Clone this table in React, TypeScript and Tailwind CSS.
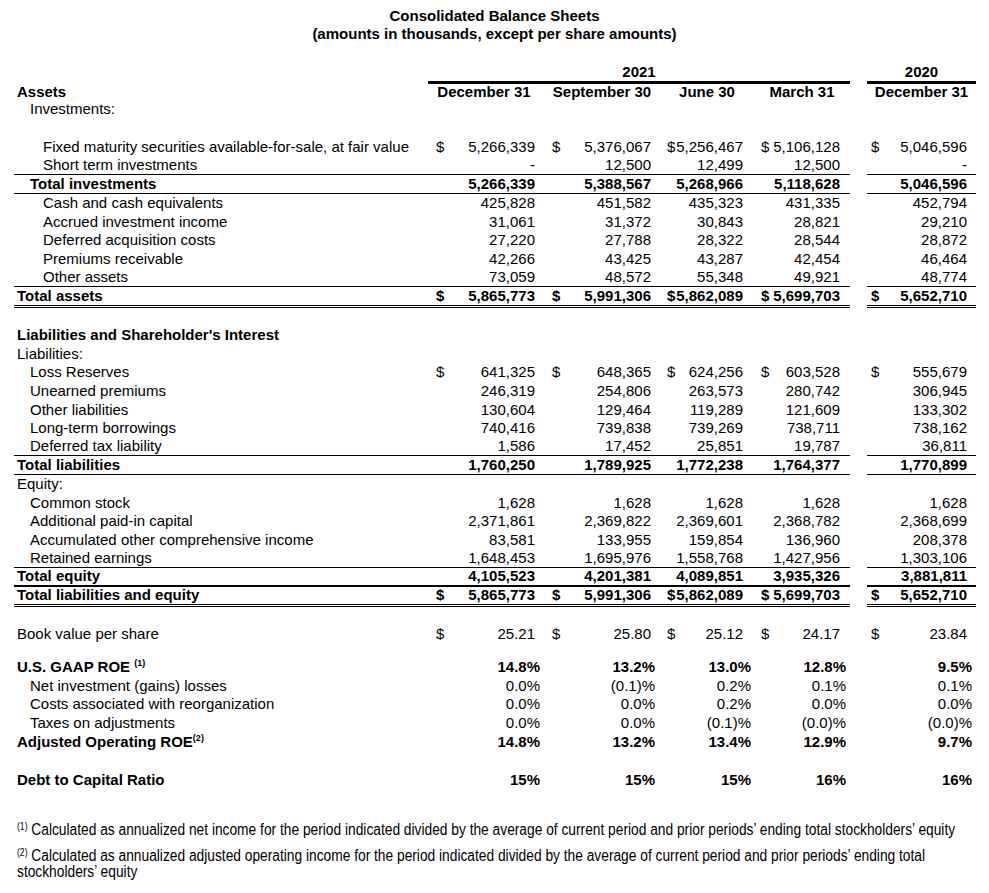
import React from 'react'

type Row = {
  label: React.ReactNode
  indent?: 0 | 1 | 2
  bold?: boolean
  vals?: string[]
  dollar?: boolean
  pct?: boolean
  line?: 'single' | 'thick' | 'double'
  h?: string
}

// column geometry (label 14-428, then 4 columns to 850, gap, 2020 column 867-976)
const cols = [
  { w: 'w-[112px]', dl: 'pl-[8px]', pr: 'pr-[5px]', pp: 'pr-[0px]', hd: 'pl-[0px]' },
  { w: 'w-[116px]', dl: 'pl-[12px]', pr: 'pr-[5px]', pp: 'pr-[1px]', hd: 'pl-[8px]' },
  { w: 'w-[96px]', dl: 'pl-[11px]', pr: 'pr-[9px]', pp: 'pr-[1px]', hd: 'pl-[6px]' },
  { w: 'w-[98px]', dl: 'pl-[9px]', pr: 'pr-[10px]', pp: 'pr-[4px]', hd: 'pl-[2px]' },
  { w: 'w-[109px]', dl: 'pl-[4px]', pr: 'pr-[9px]', pp: 'pr-[4px]', hd: 'pl-[0px]' },
]

const indents = ['pl-[3px]', 'pl-[16px]', 'pl-[29px]']

const lines = {
  single: 'border-b border-black',
  thick: 'border-b-2 border-black',
  double: 'border-b-[3px] border-double border-black',
}

const assets: Row[] = [
  { label: 'Fixed maturity securities available-for-sale, at fair value', indent: 2, dollar: true, vals: ['5,266,339', '5,376,067', '5,256,467', '5,106,128', '5,046,596'] },
  { label: 'Short term investments', indent: 2, vals: ['-', '12,500', '12,499', '12,500', '-'], line: 'single' },
  { label: 'Total investments', indent: 1, bold: true, vals: ['5,266,339', '5,388,567', '5,268,966', '5,118,628', '5,046,596'], line: 'single' },
  { label: 'Cash and cash equivalents', indent: 2, vals: ['425,828', '451,582', '435,323', '431,335', '452,794'] },
  { label: 'Accrued investment income', indent: 2, vals: ['31,061', '31,372', '30,843', '28,821', '29,210'] },
  { label: 'Deferred acquisition costs', indent: 2, vals: ['27,220', '27,788', '28,322', '28,544', '28,872'] },
  { label: 'Premiums receivable', indent: 2, vals: ['42,266', '43,425', '43,287', '42,454', '46,464'] },
  { label: 'Other assets', indent: 2, vals: ['73,059', '48,572', '55,348', '49,921', '48,774'], line: 'single' },
  { label: 'Total assets', bold: true, dollar: true, vals: ['5,865,773', '5,991,306', '5,862,089', '5,699,703', '5,652,710'], line: 'double', h: 'h-[21.6px]' },
]

const liabilities: Row[] = [
  { label: "Liabilities and Shareholder's Interest", bold: true },
  { label: 'Liabilities:' },
  { label: 'Loss Reserves', indent: 1, dollar: true, vals: ['641,325', '648,365', '624,256', '603,528', '555,679'] },
  { label: 'Unearned premiums', indent: 1, vals: ['246,319', '254,806', '263,573', '280,742', '306,945'] },
  { label: 'Other liabilities', indent: 1, vals: ['130,604', '129,464', '119,289', '121,609', '133,302'] },
  { label: 'Long-term borrowings', indent: 1, vals: ['740,416', '739,838', '739,269', '738,711', '738,162'] },
  { label: 'Deferred tax liability', indent: 1, vals: ['1,586', '17,452', '25,851', '19,787', '36,811'], line: 'single' },
  { label: 'Total liabilities', bold: true, vals: ['1,760,250', '1,789,925', '1,772,238', '1,764,377', '1,770,899'], line: 'single' },
  { label: 'Equity:' },
  { label: 'Common stock', indent: 1, vals: ['1,628', '1,628', '1,628', '1,628', '1,628'] },
  { label: 'Additional paid-in capital', indent: 1, vals: ['2,371,861', '2,369,822', '2,369,601', '2,368,782', '2,368,699'] },
  { label: 'Accumulated other comprehensive income', indent: 1, vals: ['83,581', '133,955', '159,854', '136,960', '208,378'] },
  { label: 'Retained earnings', indent: 1, vals: ['1,648,453', '1,695,976', '1,558,768', '1,427,956', '1,303,106'], line: 'single' },
  { label: 'Total equity', bold: true, vals: ['4,105,523', '4,201,381', '4,089,851', '3,935,326', '3,881,811'], line: 'thick', h: 'h-[19.2px]' },
  { label: 'Total liabilities and equity', bold: true, dollar: true, vals: ['5,865,773', '5,991,306', '5,862,089', '5,699,703', '5,652,710'], line: 'double', h: 'h-[20px]' },
]

const Sup = ({ n }: { n: number }) => (
  <sup className="relative -top-[6px] align-baseline text-[9px] font-bold">({n})</sup>
)

const ratios: Row[] = [
  { label: <>U.S. GAAP ROE <Sup n={1} /></>, bold: true, pct: true, vals: ['14.8%', '13.2%', '13.0%', '12.8%', '9.5%'] },
  { label: 'Net investment (gains) losses', indent: 1, pct: true, vals: ['0.0%', '(0.1)%', '0.2%', '0.1%', '0.1%'] },
  { label: 'Costs associated with reorganization', indent: 1, pct: true, vals: ['0.0%', '0.0%', '0.2%', '0.0%', '0.0%'] },
  { label: 'Taxes on adjustments', indent: 1, pct: true, vals: ['0.0%', '0.0%', '(0.1)%', '(0.0)%', '(0.0)%'] },
  { label: <>Adjusted Operating ROE<Sup n={2} /></>, bold: true, pct: true, vals: ['14.8%', '13.2%', '13.4%', '12.9%', '9.7%'] },
]

const Cell = ({ i, row }: { i: number; row: Row }) => {
  const c = cols[i]
  const v = row.vals?.[i]
  return (
    <div className={`flex h-full items-center justify-between ${c.w}`}>
      <span className={c.dl}>{row.dollar && v ? '$' : ''}</span>
      <span className={row.pct ? c.pp : c.pr}>{v}</span>
    </div>
  )
}

const TableRow = ({ row }: { row: Row }) => {
  const ln = row.line ? lines[row.line] : ''
  return (
    <div className={`flex ${row.h ?? 'h-[18.6px]'} ${row.bold ? 'font-bold' : ''}`}>
      <div className={`flex w-[836px] items-center ${ln}`}>
        <div className={`w-[414px] whitespace-nowrap ${indents[row.indent ?? 0]}`}>{row.label}</div>
        {[0, 1, 2, 3].map((i) => (
          <Cell key={i} i={i} row={row} />
        ))}
      </div>
      <div className="w-[17px]" />
      <div className={`flex w-[109px] items-center ${ln}`}>
        <Cell i={4} row={row} />
      </div>
    </div>
  )
}

export default function App() {
  return (
    <div className="min-h-screen w-[989px] bg-white font-['Liberation_Sans',Arial,sans-serif] text-[15px] leading-[18px] text-black">
      {/* Title */}
      <div className="pt-[7px] text-center font-bold">
        <div className="h-[18px]">Consolidated Balance Sheets</div>
        <div className="h-[18px]">(amounts in thousands, except per share amounts)</div>
      </div>

      <div className="mt-[19px] pl-[14px]">
        {/* Year header */}
        <div className="flex h-[22px] font-bold">
          <div className="w-[414px]" />
          <div className="flex w-[422px] items-center justify-center border-b-[3px] border-black">2021</div>
          <div className="w-[17px]" />
          <div className="flex w-[109px] items-center justify-center border-b-[3px] border-black">2020</div>
        </div>
        <div className="flex h-[16px] items-center font-bold">
          <div className="w-[414px] pl-[3px]">Assets</div>
          {['December 31', 'September 30', 'June 30', 'March 31'].map((t, i) => (
            <div key={t} className={`text-center whitespace-nowrap ${cols[i].w} ${cols[i].hd}`}>{t}</div>
          ))}
          <div className="w-[17px]" />
          <div className="w-[109px] text-center">December 31</div>
        </div>
        <div className="flex h-[17px] items-center">
          <div className="pl-[16px]">Investments:</div>
        </div>

        <div className="mt-[21px]">
          {assets.map((r, i) => (
            <TableRow key={i} row={r} />
          ))}
        </div>

        <div className="mt-[17.6px]">
          {liabilities.map((r, i) => (
            <TableRow key={i} row={r} />
          ))}
        </div>

        <div className="mt-[18px]">
          <TableRow row={{ label: 'Book value per share', dollar: true, vals: ['25.21', '25.80', '25.12', '24.17', '23.84'], h: 'h-[18px]' }} />
        </div>

        <div className="mt-[15px]">
          {ratios.map((r, i) => (
            <TableRow key={i} row={r} />
          ))}
        </div>

        <div className="mt-[20px]">
          <TableRow row={{ label: 'Debt to Capital Ratio', bold: true, pct: true, vals: ['15%', '15%', '15%', '16%', '16%'], h: 'h-[18px]' }} />
        </div>
      </div>

      {/* Footnotes (narrow face in the original) */}
      <div className="mt-[33px] pl-[17px] text-[16px] leading-[16px]">
        <p className="origin-left scale-x-[0.86] whitespace-nowrap">
          <sup className="relative -top-[5px] align-baseline text-[10px]">(1)</sup> Calculated as annualized net income for the period indicated divided by the average of current period and prior periods’ ending total stockholders’ equity
        </p>
        <p className="mt-[10px] origin-left scale-x-[0.86] whitespace-nowrap">
          <sup className="relative -top-[5px] align-baseline text-[10px]">(2)</sup> Calculated as annualized adjusted operating income for the period indicated divided by the average of current period and prior periods’ ending total
          <br />
          stockholders’ equity
        </p>
      </div>
    </div>
  )
}
